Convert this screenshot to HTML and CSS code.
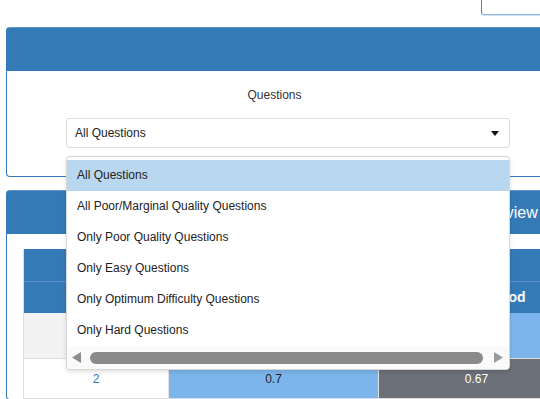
FILE: index.html
```html
<!DOCTYPE html>
<html lang="en">
<head>
<meta charset="utf-8">
<title>Question Analysis</title>
<link rel="stylesheet" href="styles.css">
</head>
<body>
<div class="page">
  <div class="topbar"><div class="topbox"></div></div>

  <section class="panel panel-filter">
    <div class="panel-heading"></div>
    <div class="panel-body filter-body">
      <div class="form-group">
        <label class="field-label">Questions</label>
        <div class="select-wrap">
          <div class="select">
            <span class="select-value">All Questions</span>
            <span class="caret"></span>
          </div>
          <div class="dropdown">
            <ul class="options">
              <li class="option active">All Questions</li>
              <li class="option">All Poor/Marginal Quality Questions</li>
              <li class="option">Only Poor Quality Questions</li>
              <li class="option">Only Easy Questions</li>
              <li class="option">Only Optimum Difficulty Questions</li>
              <li class="option">Only Hard Questions</li>
            </ul>
            <div class="hscroll">
              <svg class="arrow arrow-left" width="9" height="11" viewBox="0 0 9 11"><polygon points="9,0 9,11 0,5.5" fill="#8c8c8c"/></svg>
              <div class="thumb"></div>
              <svg class="arrow arrow-right" width="9" height="11" viewBox="0 0 9 11"><polygon points="0,0 0,11 9,5.5" fill="#9c9c9c"/></svg>
            </div>
          </div>
        </div>
      </div>
    </div>
  </section>

  <section class="panel panel-overview">
    <div class="panel-heading">
      <h3 class="panel-title">Overview</h3>
    </div>
    <div class="panel-body overview-body">
      <div class="stats">
        <div class="cell head head-top span-all"></div>
        <div class="cell head"></div>
        <div class="cell head"></div>
        <div class="cell head head-good">Good</div>
        <div class="cell head"></div>

        <div class="cell c-grey"></div>
        <div class="cell c-light"></div>
        <div class="cell c-light"></div>
        <div class="cell c-light"></div>

        <div class="cell c-white link">2</div>
        <div class="cell c-light">0.7</div>
        <div class="cell c-dark">0.67</div>
        <div class="cell c-light"></div>
      </div>
    </div>
  </section>
</div>
</body>
</html>
```

FILE: styles.css
```css
html, body {
  margin: 0;
  padding: 0;
  overflow: hidden;
}

body {
  width: 540px;
  height: 399px;
  background: #ffffff;
  color: #333333;
  font-family: "Liberation Sans", Arial, sans-serif;
  font-size: 12px;
}

.page {
  width: 760px;
}

/* top-right box cut by the window */
.topbar {
  height: 15px;
  padding-left: 481px;
}

.topbox {
  height: 15px;
  box-sizing: border-box;
  border-left: 1px solid #4a86c0;
  border-bottom: 1px solid #8fb4dc;
  border-bottom-left-radius: 3px;
  box-shadow: 0 1px 0 #d3e2f2;
}

/* panels */
.panel {
  margin-left: 6px;
  border: 1px solid #337ab7;
  border-top-color: #5f95ca;
  border-radius: 4px;
  background: #ffffff;
}

.panel-filter {
  margin-top: 12px;
}

.panel-overview {
  margin-top: 13px;
}

.panel-heading {
  height: 43px;
  background: #337ab7;
  display: flex;
  align-items: center;
}

.panel-title {
  margin: 0;
  padding-left: 464px;
  color: #ffffff;
  font-size: 16px;
  font-weight: normal;
  white-space: nowrap;
}

.filter-body {
  padding: 17px 0 28px 59px;
}

.form-group {
  width: 444px;
}

.field-label {
  display: block;
  height: 15px;
  line-height: 15px;
  text-align: center;
  padding-right: 27px;
  margin-bottom: 15px;
  color: #333333;
}

.select-wrap {
  position: relative;
}

.select {
  height: 30px;
  box-sizing: border-box;
  border: 1px solid #dddddd;
  border-radius: 3px;
  padding: 0 10px 0 8px;
  display: flex;
  align-items: center;
  justify-content: space-between;
  color: #222222;
  background: #ffffff;
}

.caret {
  width: 0;
  height: 0;
  border-top: 5px solid #111111;
  border-left: 4px solid transparent;
  border-right: 4px solid transparent;
}

/* open dropdown list overlay */
.dropdown {
  position: absolute;
  z-index: 10;
  left: 0;
  top: 38px;
  width: 444px;
  box-sizing: border-box;
  border: 1px solid #d6d6d6;
  border-radius: 4px;
  background: #ffffff;
  box-shadow: 0 2px 4px rgba(0, 0, 0, 0.12);
  overflow: hidden;
}

.options {
  list-style: none;
  margin: 0;
  padding: 3px 0 0 0;
}

.option {
  height: 31px;
  line-height: 31px;
  padding-left: 10px;
  color: #222222;
  white-space: nowrap;
}

.option.active {
  background: #b9d7ee;
}

.hscroll {
  height: 23px;
  display: flex;
  align-items: center;
  padding: 0 6px 0 5px;
  background: #fafafa;
}

.arrow {
  flex: none;
  display: block;
}

.thumb {
  flex: 1;
  height: 12px;
  margin: 0 11px 0 9px;
  border-radius: 6px;
  background: #8a8a8a;
}

/* overview table */
.overview-body {
  padding: 15px 0 0 16px;
}

.stats {
  display: grid;
  grid-template-columns: 145px 210px 196px 180px;
  grid-template-rows: 33px 31px 46px 40px;
  border-left: 1px solid #dddddd;
}

.cell {
  display: flex;
  align-items: center;
  justify-content: center;
  box-sizing: border-box;
  border-right: 1px solid #e4e4e4;
  border-bottom: 1px solid #dddddd;
}

.head {
  background: #337ab7;
  color: #ffffff;
  font-weight: bold;
  font-size: 14px;
  border-right-color: #337ab7;
  border-bottom-color: #337ab7;
}

.head-top {
  grid-column: 1 / -1;
  border-bottom-color: #5d93c8;
}

.head-good {
  justify-content: flex-start;
  padding-left: 110px;
}

.c-grey {
  background: #f2f2f2;
}

.c-white {
  background: #ffffff;
}

.c-light {
  background: #7cb5ec;
  color: #222222;
}

.c-dark {
  background: #6c7079;
  color: #ffffff;
}

.link {
  color: #337ab7;
}
```
